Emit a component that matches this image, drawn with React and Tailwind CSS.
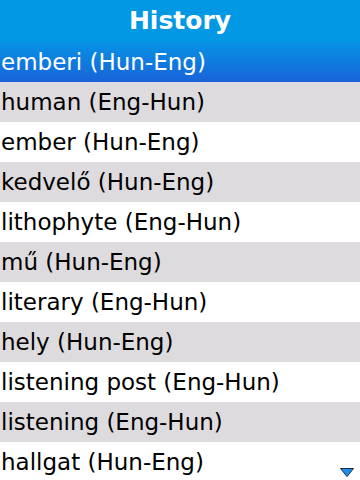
import React from 'react';

const items = [
  'human (Eng-Hun)',
  'ember (Hun-Eng)',
  'kedvelő (Hun-Eng)',
  'lithophyte (Eng-Hun)',
  'mű (Hun-Eng)',
  'literary (Eng-Hun)',
  'hely (Hun-Eng)',
  'listening post (Eng-Hun)',
  'listening (Eng-Hun)',
  'hallgat (Hun-Eng)',
];

const App = () => {
  return (
    <div className="relative h-[480px] w-[360px] overflow-hidden bg-white font-['DejaVu_Sans',sans-serif]">
      <div className="flex h-[42px] items-center justify-center bg-[#0398e4] pb-[1px] text-[25px] font-bold text-white">
        History
      </div>
      <div className="flex h-[40px] items-center bg-gradient-to-b from-[#0792e4] to-[#1863d9] pl-[1px] text-[23px] text-white">
        emberi (Hun-Eng)
      </div>
      {items.map((item, i) => (
        <div
          key={item}
          className={`flex h-[40px] items-center pl-[1px] text-[23px] text-black ${i % 2 === 0 ? 'bg-[#dddbde]' : 'bg-white'}`}
        >
          {item}
        </div>
      ))}
      {/* scroll-down indicator */}
      <svg className="absolute left-[340px] top-[468px]" width="14" height="9" viewBox="0 0 14 9">
        <polygon points="0.5,0.5 13.5,0.5 7,8.5" fill="#1e8ff0" stroke="#1a2a3a" strokeWidth="1" />
      </svg>
    </div>
  );
};

export default App;
